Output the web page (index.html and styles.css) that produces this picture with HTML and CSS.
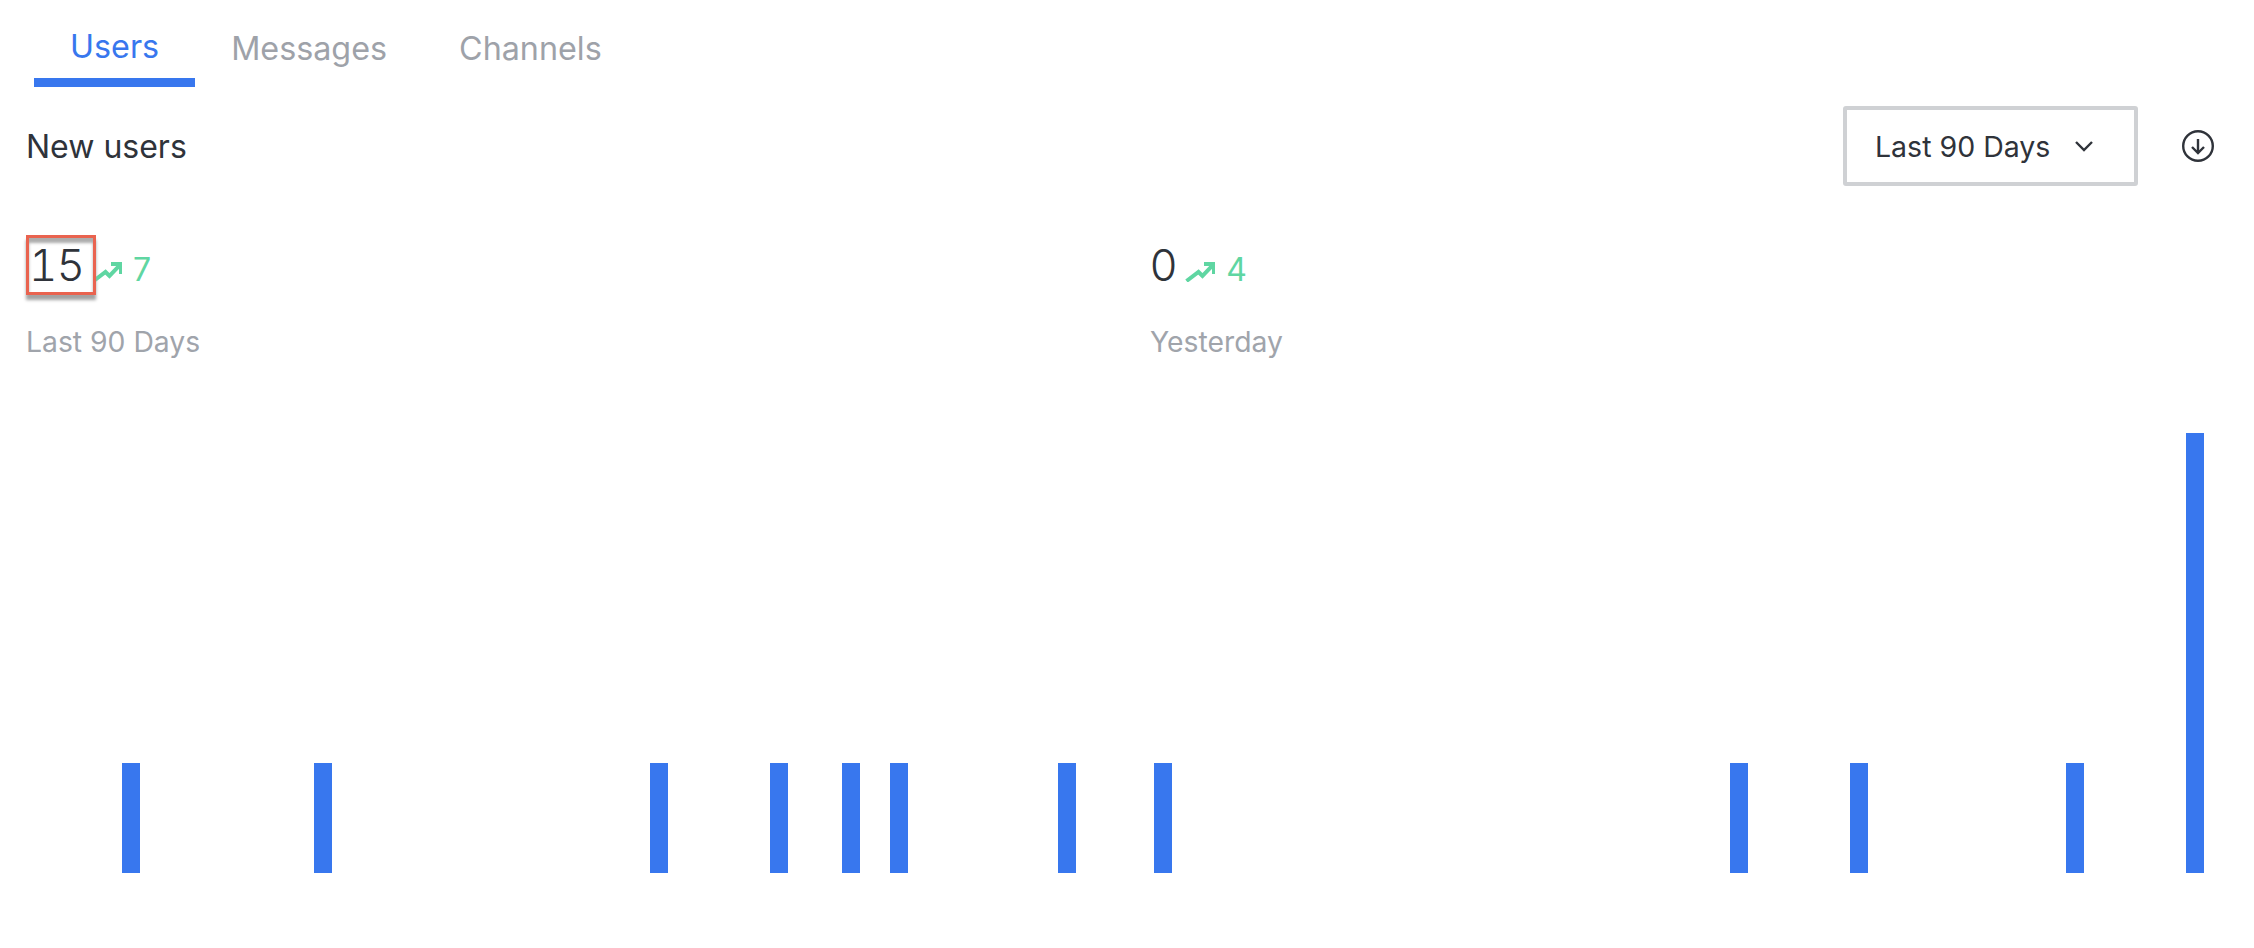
FILE: index.html
```html
<!DOCTYPE html>
<html lang="en">
  <head>
    <meta charset="UTF-8" />
    <title>New users</title>
    <link rel="stylesheet" href="styles.css">
  </head>
  <body>
    <div class="tabs">
      <a class="tab tab-active">Users</a>
      <a class="tab">Messages</a>
      <a class="tab">Channels</a>
    </div>

    <div class="header">
      <h2>New users</h2>
      <div class="controls">
        <div class="dropdown">
          <span>Last 90 Days</span>
          <svg class="chevron" viewBox="0 0 20 12"><path d="M2 2l8 8 8-8" /></svg>
        </div>
        <svg class="download" viewBox="0 0 32 32">
          <circle cx="16" cy="16" r="14.8" />
          <path d="M16 9v14M10 17l6 6 6-6" />
        </svg>
      </div>
    </div>

    <div class="stats">
      <div class="stat">
        <div class="stat-row">
          <span class="number number-marked">15</span>
          <svg class="trend" viewBox="0 0 30 21"><path d="M1.500 20l12-9 4 4 12-12.500M19 3h10v10" /></svg>
          <span class="delta">7</span>
        </div>
        <div class="stat-label">Last 90 Days</div>
      </div>
      <div class="stat">
        <div class="stat-row">
          <span class="number">0</span>
          <svg class="trend" viewBox="0 0 30 21"><path d="M1.500 20l12-9 4 4 12-12.500M19 3h10v10" /></svg>
          <span class="delta">4</span>
        </div>
        <div class="stat-label">Yesterday</div>
      </div>
    </div>

    <div class="chart">
      <div class="bar" style="grid-column: 5; height: 110px"></div>
      <div class="bar" style="grid-column: 13; height: 110px"></div>
      <div class="bar" style="grid-column: 27; height: 110px"></div>
      <div class="bar" style="grid-column: 32; height: 110px"></div>
      <div class="bar" style="grid-column: 35; height: 110px"></div>
      <div class="bar" style="grid-column: 37; height: 110px"></div>
      <div class="bar" style="grid-column: 44; height: 110px"></div>
      <div class="bar" style="grid-column: 48; height: 110px"></div>
      <div class="bar" style="grid-column: 72; height: 110px"></div>
      <div class="bar" style="grid-column: 77; height: 110px"></div>
      <div class="bar" style="grid-column: 86; height: 110px"></div>
      <div class="bar" style="grid-column: 91; height: 440px"></div>
    </div>
  </body>
</html>
```

FILE: styles.css
```css
body {
  font-family: Inter, "Liberation Sans", sans-serif;
  background-color: #fff;
  color: #2f333a;
  margin: 0;
  height: 948px;
  overflow: hidden;
}
.tabs {
  display: flex;
  padding-left: 34px;
}
.tab {
  color: #9ea2a9;
  font-size: 32.3px;
  line-height: 40px;
  padding: 29px 36px 10px;
  height: 40px;
}
.tab:first-child {
  padding-top: 27px;
  padding-bottom: 11px;
  border-bottom: 9px solid #3877ee;
  color: #3877ee;
}
.header {
  display: flex;
  justify-content: space-between;
  align-items: center;
  padding: 19px 40px 0 26px;
}
h2 {
  margin: 1px 0 0;
  font-size: 32px;
  font-weight: 430;
}
.controls {
  display: flex;
  align-items: center;
  gap: 44px;
}
.dropdown {
  display: flex;
  align-items: center;
  gap: 24px;
  width: 295px;
  height: 80px;
  box-sizing: border-box;
  padding-left: 28px;
  border: 4px solid #cfd1d4;
  border-radius: 3px;
  font-size: 28.5px;
}
.chevron {
  width: 20px;
  height: 12px;
  fill: none;
  stroke: #2f333a;
  stroke-width: 2.4;
}
.download {
  width: 32px;
  height: 32px;
  fill: none;
  stroke: #2f333a;
  stroke-width: 2.4;
}
.stats {
  display: grid;
  grid-template-columns: 1fr 1fr;
  gap: 46px;
  padding: 49px 26px 0;
}
.stat-row {
  display: flex;
  align-items: center;
  height: 60px;
}
.number {
  font-size: 44px;
  font-weight: 350;
  line-height: 60px;
}
.number-marked {
  position: relative;
  width: 70px;
  height: 60px;
  margin-right: -12px;
  box-sizing: border-box;
  border: 3px solid #e9634f;
  background-color: #fff;
  box-shadow: 0 5px 3px #a3a3a3, inset 0 5px 3px #adadad;
  line-height: 54px;
  letter-spacing: -1px;
  font-variant-numeric: tabular-nums;
}
.trend {
  width: 30px;
  height: 21px;
  margin: 12px 11px 0 8px;
  fill: none;
  stroke: #5fd6a2;
  stroke-width: 4;
}
.delta {
  color: #5fd6a2;
  font-size: 32px;
  margin-top: 8px;
}
.stat-label {
  margin-top: 30px;
  color: #a0a4ab;
  font-size: 28.3px;
  line-height: 34px;
}
.chart {
  display: grid;
  grid-template-columns: repeat(91, 18px);
  column-gap: 6px;
  align-items: end;
  height: 440px;
  margin-top: 74px;
  padding-left: 26px;
}
.bar {
  grid-row: 1;
  background-color: #3877ee;
}
```
